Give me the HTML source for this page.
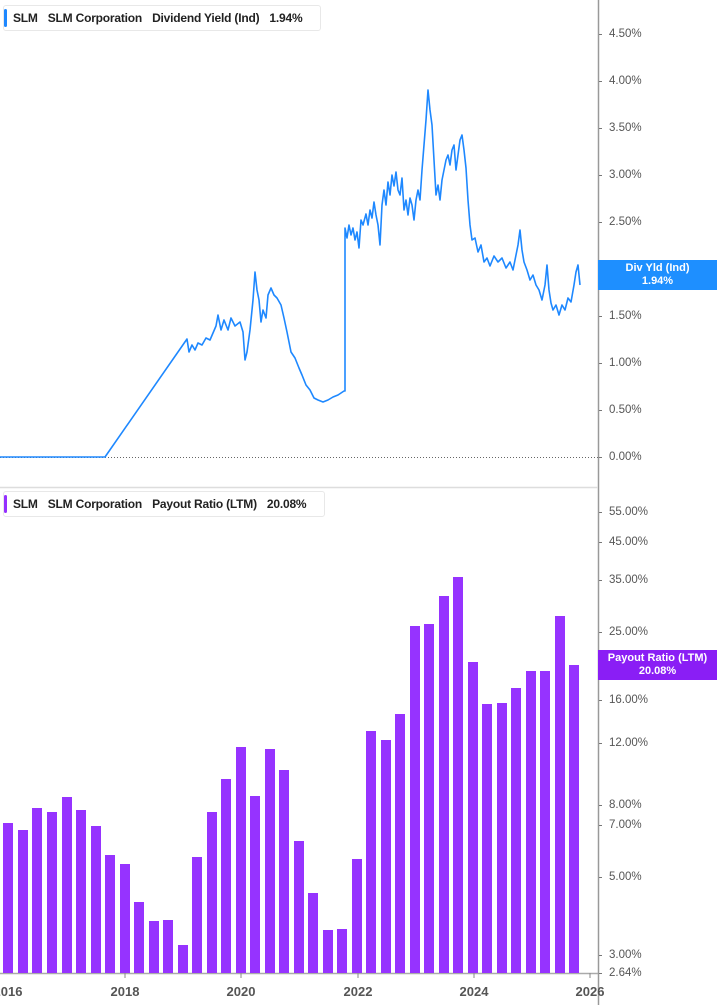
<!DOCTYPE html>
<html><head><meta charset="utf-8"><style>
body{margin:0;width:717px;height:1005px;background:#fff;overflow:hidden;font-family:"Liberation Sans",sans-serif;position:relative}
.leg{position:absolute;left:3px;height:26px;border:1px solid #e8e8e8;border-radius:3px;background:#fff;font-size:12px;font-weight:bold;color:#222;line-height:25px;padding-left:9px;box-sizing:border-box;white-space:nowrap;overflow:hidden;letter-spacing:-0.2px}
.leg:before{content:"";position:absolute;left:0;top:3px;bottom:3px;width:3px;border-radius:2px;background:var(--c)}
.leg span{margin-right:10px}
.lbl{position:absolute;left:609px;font-size:11.5px;color:#555;transform:translateY(-50%)}
.lbl:before{content:"";position:absolute;left:-10px;top:50%;width:3px;height:1px;background:#777}
.yr{position:absolute;top:984px;font-size:13px;font-weight:bold;color:#555;transform:translateX(-50%)}
.tag{position:absolute;left:598px;width:119px;height:30px;color:#fff;font-size:11px;font-weight:bold;text-align:center;line-height:13px;padding-top:2px;box-sizing:border-box}
</style></head><body>
<div class="leg" style="--c:#1e88ff;top:5px;width:318px"><span>SLM</span><span>SLM Corporation</span><span>Dividend Yield (Ind)</span><span>1.94%</span></div>
<div class="leg" style="--c:#9430ff;top:491px;width:322px"><span>SLM</span><span>SLM Corporation</span><span>Payout Ratio (LTM)</span><span>20.08%</span></div>
<svg width="717" height="1005" style="position:absolute;left:0;top:0;z-index:-1">
<line x1="598.5" y1="0" x2="598.5" y2="1005" stroke="#999" stroke-width="1.5"/>
<line x1="0" y1="487.5" x2="598" y2="487.5" stroke="#ddd" stroke-width="1.5"/>
<line x1="0" y1="457.5" x2="598" y2="457.5" stroke="#666" stroke-dasharray="1,2"/>
<line x1="0" y1="973.5" x2="598" y2="973.5" stroke="#aaa" stroke-width="1.5"/>
<g stroke="#888"><line x1="125" y1="973" x2="125" y2="978"/><line x1="241" y1="973" x2="241" y2="978"/><line x1="358" y1="973" x2="358" y2="978"/><line x1="474" y1="973" x2="474" y2="978"/><line x1="590" y1="973" x2="590" y2="978"/></g>
<polyline fill="none" stroke="#1e88ff" stroke-width="1.6" stroke-linejoin="round" points="0,457 105,457 187,339 189,352 192,345 195,350 198,343 202,345 206,338 210,340 213,333 216,326 218,315 221,330 224,320 228,330 231,318 235,326 240,322 243,332 245,360 247,352 250,330 253,300 255,272 257,290 259,300 261,322 263,310 266,318 268,295 271,288 274,295 277,298 281,305 284,318 287,332 291,352 295,358 299,368 302,375 306,385 310,390 314,398 318,400 323,402 328,400 333,397 338,395 344,391 345,391 345,228 347,238 349,225 351,235 353,228 355,240 357,232 359,248 361,220 363,225 366,214 368,225 370,210 372,218 374,202 376,215 378,225 380,245 382,205 384,190 386,205 388,182 390,195 392,175 394,186 396,172 398,190 400,195 402,178 404,210 406,200 408,215 410,198 412,205 414,220 416,200 418,190 420,200 422,170 424,145 426,120 428,90 430,110 432,125 434,160 436,195 438,185 440,200 442,180 444,170 446,160 448,155 450,165 452,150 454,145 456,170 458,155 460,140 462,135 464,150 466,168 468,200 470,225 472,240 475,238 478,252 481,245 484,262 487,258 490,266 494,256 498,262 502,258 506,268 510,262 513,270 516,255 518,245 520,230 522,250 524,262 527,270 530,280 533,275 536,285 539,290 542,300 545,285 547,265 549,290 551,303 553,310 556,305 559,315 562,305 565,310 568,298 571,302 574,285 576,272 578,265 580,285"/>
</svg>
<div id="bars"></div>
<script>
var d=[[8,823],[23,830],[37,808],[52,812],[67,797],[81,810],[96,826],[110,855],[125,864],[139,902],[154,921],[168,920],[183,945],[197,857],[212,812],[226,779],[241,747],[255,796],[270,749],[284,770],[299,841],[313,893],[328,930],[342,929],[357,859],[371,731],[386,740],[400,714],[415,626],[429,624],[444,596],[458,577],[473,662],[487,704],[502,703],[516,688],[531,671],[545,671],[560,616],[574,665]];
var h='';d.forEach(function(b){h+='<div style="position:absolute;left:'+(b[0]-5)+'px;top:'+b[1]+'px;width:10px;height:'+(973-b[1])+'px;background:#9633ff"></div>'});
document.getElementById('bars').innerHTML=h;
</script>
<div class="lbl" style="top:34px">4.50%</div><div class="lbl" style="top:81px">4.00%</div><div class="lbl" style="top:128px">3.50%</div><div class="lbl" style="top:175px">3.00%</div><div class="lbl" style="top:222px">2.50%</div><div class="lbl" style="top:269px">2.00%</div><div class="lbl" style="top:316px">1.50%</div><div class="lbl" style="top:363px">1.00%</div><div class="lbl" style="top:410px">0.50%</div><div class="lbl" style="top:457px">0.00%</div>
<div class="lbl" style="top:512px">55.00%</div><div class="lbl" style="top:542px">45.00%</div><div class="lbl" style="top:580px">35.00%</div><div class="lbl" style="top:632px">25.00%</div><div class="lbl" style="top:700px">16.00%</div><div class="lbl" style="top:743px">12.00%</div><div class="lbl" style="top:805px">8.00%</div><div class="lbl" style="top:825px">7.00%</div><div class="lbl" style="top:877px">5.00%</div><div class="lbl" style="top:955px">3.00%</div><div class="lbl" style="top:973px">2.64%</div>
<div class="tag" style="top:260px;background:#1e8fff">Div Yld (Ind)<br>1.94%</div>
<div class="tag" style="top:650px;background:#8a1ef5">Payout Ratio (LTM)<br>20.08%</div>
<div class="yr" style="left:8px">2016</div><div class="yr" style="left:125px">2018</div><div class="yr" style="left:241px">2020</div><div class="yr" style="left:358px">2022</div><div class="yr" style="left:474px">2024</div><div class="yr" style="left:590px">2026</div>
</body></html>
